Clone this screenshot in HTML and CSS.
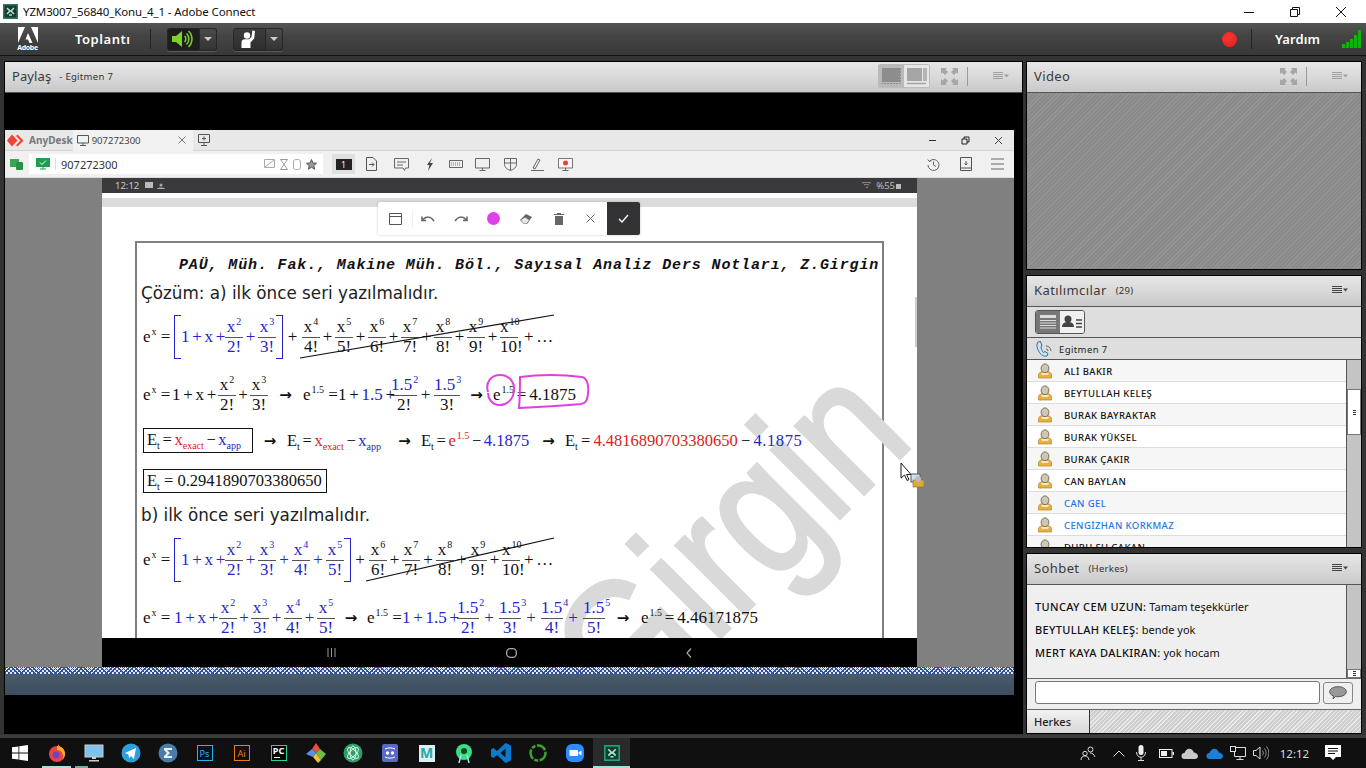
FILE: index.html
```html
<!DOCTYPE html>
<html lang="tr">
<head>
<meta charset="utf-8">
<title>YZM3007_56840_Konu_4_1 - Adobe Connect</title>
<link rel="stylesheet" href="styles.css">
</head>
<body>
<svg class="defs" width="0" height="0">
  <symbol id="user" viewBox="0 0 16 16">
    <path d="M1.5 15v-3.5c0-1.5 2-2.5 3.5-3h6c1.5.5 3.500 1.500 3.500 3V15z" fill="#e8b040" stroke="#b88420" stroke-width=".7"/>
    <ellipse cx="8" cy="5.300" rx="3.900" ry="4.400" fill="#cfc6b0" stroke="#6e665a" stroke-width=".9"/>
    <path d="M4 10h8l-1 2H5z" fill="#f4e8c8"/>
  </symbol>
  <symbol id="menu" viewBox="0 0 16 8">
    <path d="M0 .5h10M0 2.500h10M0 4.500h10M0 6.500h10" stroke="currentColor" stroke-width="1"/>
    <path d="M11 2.500h5l-2.500 3z" fill="currentColor"/>
  </symbol>
  <symbol id="expand" viewBox="0 0 17 17">
    <path d="M0 0h6L4.500 1.500 7 4 4 7 1.500 4.500 0 6zM17 0v6l-1.500-1.500L13 7l-3-3 2.500-2.500L11 0zM0 17v-6l1.500 1.500L4 10l3 3-2.500 2.500L6 17zM17 17h-6l1.500-1.500L10 13l3-3 2.500 2.500L17 11z" fill="#a6a6a6"/>
  </symbol>
</svg>

<header class="titlebar">
  <svg class="app-ico" width="15" height="15" viewBox="0 0 15 15"><rect width="15" height="15" fill="#2c7a5e"/><rect x="1.500" y="1.500" width="12" height="12" fill="#1d3a33"/><path d="M4 4l3 3-3 3M11 4L8 7l3 3M6 11h3" stroke="#9fe8c8" stroke-width="1.600" fill="none"/></svg>
  <span class="win-title">YZM3007_56840_Konu_4_1 - Adobe Connect</span>
  <div class="win-ctrls">
    <svg width="12" height="12" viewBox="0 0 12 12"><path d="M1 6.500h10" stroke="#111"/></svg>
    <svg width="12" height="12" viewBox="0 0 12 12"><path d="M1.500 3.500h7v7h-7zM3.500 3.500v-2h7v7h-2" stroke="#111" fill="none"/></svg>
    <svg width="12" height="12" viewBox="0 0 12 12"><path d="M1 1l10 10M11 1L1 11" stroke="#111"/></svg>
  </div>
</header>

<nav class="topbar">
  <div class="adobe">
    <svg width="20" height="16" viewBox="0 0 20 16"><path d="M0 0h7L0 16zM20 0h-7l7 16zM10 6l4.500 10h-3L10 12.500H7.500z" fill="#fff"/></svg>
    <span class="adobe-t">Adobe</span>
  </div>
  <span class="top-label">Toplantı</span>
  <span class="top-sep"></span>
  <div class="btn-group">
    <span class="tb-main on">
      <svg width="22" height="18" viewBox="0 0 22 18"><path d="M0 6h4l6-5v16l-6-5H0z" fill="#7fd02a"/><path d="M12.500 6a4 4 0 010 6M14.500 3.500a7.500 7.500 0 010 11M16.500 1a11 11 0 010 16" stroke="#7fd02a" stroke-width="1.500" fill="none"/></svg>
    </span>
    <span class="tb-drop"><i class="caret"></i></span>
  </div>
  <div class="btn-group second">
    <span class="tb-main">
      <svg width="18" height="20" viewBox="0 0 18 20"><circle cx="7" cy="6.500" r="3.200" fill="#fff"/><path d="M1.500 19v-5.500c0-2 1.500-3.200 3-3.200h4.500l2.500-2.300.8-6.500 2.700.5-.8 7.500-3.700 4V19z" fill="#fff"/></svg>
    </span>
    <span class="tb-drop"><i class="caret"></i></span>
  </div>
  <span class="top-spacer"></span>
  <span class="rec"></span>
  <span class="top-sep sep-b"></span>
  <span class="top-label help">Yardım</span>
  <div class="signal"><i class="b1"></i><i class="b2"></i><i class="b3"></i><i class="b4"></i><i class="b5"></i></div>
</nav>

<main class="room">
  <section class="panel share">
    <div class="pod-head">
      <span class="pod-title pay">Paylaş</span><span class="pod-sub">- Egitmen 7</span>
      <span class="grow"></span>
      <div class="view-toggle">
        <span class="vt on"><svg width="20" height="17" viewBox="0 0 20 17"><rect x="0" y="0" width="18" height="14" fill="#8d8d8d"/><path d="M18.500 0v15.500H0" stroke="#8d8d8d" stroke-dasharray="2 1" fill="none"/></svg></span>
        <span class="vt"><svg width="20" height="17" viewBox="0 0 20 17"><rect x="0" y="0" width="15" height="13" fill="#a5a5a5"/><path d="M17 0v13M19 0v13M0 15.500h19" stroke="#a5a5a5" stroke-width="1.500"/></svg></span>
      </div>
      <svg class="ico-exp" width="17" height="17"><use href="#expand"/></svg>
      <span class="head-sep"></span>
      <svg class="ico-menu dim" width="16" height="8"><use href="#menu"/></svg>
    </div>
    <div class="share-body">
      <div class="remote">
        <div class="ad-title">
          <svg class="ad-logo" width="17" height="13" viewBox="0 0 17 13"><path d="M5 .5L10.500 6.500 5 12.500 0 6.500z" fill="#ef443b"/><path d="M10.500.5L16.500 6.500l-6 6L9 11l4.500-4.500L9 2z" fill="#ef443b"/></svg>
          <span class="ad-name">AnyDesk</span>
          <div class="ad-tab">
            <svg width="12" height="11" viewBox="0 0 12 11"><path d="M.5.500h11v7.500H.5zM6 8v2.500M3 10.500h6" stroke="#555" fill="none"/></svg>
            <span>907272300</span>
            <span class="grow"></span>
            <svg width="8" height="8" viewBox="0 0 8 8"><path d="M.5.500l7 7M7.500.500l-7 7" stroke="#777"/></svg>
          </div>
          <svg class="ad-new" width="12" height="12" viewBox="0 0 12 12"><path d="M.5.500h11v8H.5zM6 9v2.500M3 11.500h6M6 2.500v4M4 4.500h4" stroke="#555" fill="none"/></svg>
          <span class="grow"></span>
          <svg class="ad-ctl" width="9" height="9" viewBox="0 0 9 9"><path d="M1 4.500h7" stroke="#333"/></svg>
          <svg class="ad-ctl" width="9" height="9" viewBox="0 0 9 9"><path d="M1 3h5v5H1zM3 3V1h5v5H6" stroke="#222" fill="none"/></svg>
          <svg class="ad-ctl" width="9" height="9" viewBox="0 0 9 9"><path d="M1 1l7 7M8 1L1 8" stroke="#444"/></svg>
        </div>
        <div class="ad-tool">
          <svg class="ad-ok" width="13" height="11" viewBox="0 0 13 11"><rect width="9" height="8" fill="#3aa552"/><rect x="6" y="3" width="7" height="8" rx="1" fill="#2b8f47"/></svg>
          <div class="ad-addr">
            <svg width="14" height="12" viewBox="0 0 14 12"><rect width="14" height="9" fill="#1f9e4d"/><path d="M4 4.500l2 2 4-4" stroke="#fff" fill="none"/><path d="M4 11h6M7 9v2" stroke="#1f9e4d"/></svg>
            <span class="addr-sep"></span>
            <span class="addr-t">907272300</span>
            <span class="grow"></span>
            <svg class="addr-i" width="11" height="10" viewBox="0 0 11 10"><path d="M.5.500h10v8H.5zM1 8l9-7" stroke="#aaa" fill="none"/></svg>
            <svg class="addr-i" width="8" height="11" viewBox="0 0 8 11"><path d="M.5.500h7L.5 10.500h7z" stroke="#999" fill="none"/></svg>
            <svg class="addr-i" width="8" height="11" viewBox="0 0 8 11"><path d="M.5 2v7c0 2 7 2 7 0V2c0-2-7-2-7 0z" stroke="#aaa" fill="none"/></svg>
            <svg class="addr-i" width="11" height="11" viewBox="0 0 11 11"><path d="M5.500.500l1.500 3.500 3.500.3-2.700 2.300.9 3.600-3.200-2-3.200 2 .9-3.600L.5 4.300 4 4z" stroke="#555" fill="#999"/></svg>
          </div>
          <span class="chip"><b>1</b></span>
          <svg class="t1" width="11" height="14" viewBox="0 0 11 14"><path d="M.5.500h6.500l3.500 3.500v9.500H.5zM3 7.500h5M6 5.500l2 2-2 2" stroke="#555" fill="none"/></svg>
          <svg class="t2" width="15" height="13" viewBox="0 0 15 13"><path d="M.5.500h14v9.500h-3l-1 2.500-1.500-2.500H.5zM3 4h9M3 7h6" stroke="#666" fill="none"/></svg>
          <svg class="t3" width="7" height="13" viewBox="0 0 7 13"><path d="M6 0L1 7h2.500L2 13l5-8H4z" fill="#444"/></svg>
          <svg class="t4" width="14" height="8" viewBox="0 0 14 8"><path d="M.5.500h13v7H.5z" stroke="#666" fill="none"/><path d="M2 3h10M2 5h10" stroke="#777" stroke-dasharray="1 1"/></svg>
          <svg class="t5" width="15" height="13" viewBox="0 0 15 13"><path d="M.5.500h14v9.500H.5zM7.500 10v2.500M4.500 12.500h6" stroke="#666" fill="none"/></svg>
          <svg class="t6" width="13" height="13" viewBox="0 0 13 13"><path d="M.5.500h12v6c0 3-3 5-6 6-3-1-6-3-6-6zM.5 5h12M6.500 .5v12" stroke="#666" fill="none"/></svg>
          <svg class="t7" width="13" height="13" viewBox="0 0 13 13"><path d="M2 10L7 1l2 1-5 9zM0 12.500h13" stroke="#666" fill="none"/></svg>
          <svg class="t8" width="15" height="13" viewBox="0 0 15 13"><path d="M.5.500h14v9.500H.5z" stroke="#777" fill="#f7f7f7"/><circle cx="7.500" cy="5" r="2.500" fill="#e8413a"/><path d="M7.500 10v2.500M4.500 12.500h6" stroke="#666"/></svg>
          <span class="grow"></span>
          <svg class="r1" width="13" height="13" viewBox="0 0 13 13"><path d="M2.500 3.200A5.500 5.500 0 111 7M.8 1.500l1.500 2 2-.8M6.500 3.500v3.500l2.500 1.500" stroke="#666" fill="none"/></svg>
          <svg class="r2" width="12" height="14" viewBox="0 0 12 14"><path d="M.5.500h11v13H.5zM.5 11h11M6 4v3.500M4.500 6.500L6 8l1.500-1.500" stroke="#555" fill="none"/></svg>
          <svg class="r3" width="13" height="12" viewBox="0 0 13 12"><path d="M0 1h13M0 6h13M0 11h13" stroke="#666"/></svg>
        </div>
        <div class="stage">
          <div class="phone">
            <div class="status">
              <span class="st-t">12:12</span>
              <svg width="8" height="7" viewBox="0 0 8 7"><rect width="8" height="6" fill="#bbb"/></svg>
              <svg width="8" height="6" viewBox="0 0 8 6"><circle cx="4" cy="2" r="1.500" fill="#aaa"/><path d="M0 6c0-2 8-2 8 0z" fill="#aaa"/></svg>
              <span class="grow"></span>
              <svg width="11" height="7" viewBox="0 0 11 7"><path d="M1 1c3-1 6-1 9 0M3 3c2-.8 3-.8 5 0M5 5l2 .5" stroke="#999" fill="none"/></svg>
              <span class="st-b">%55</span>
              <svg class="st-l" width="5" height="7" viewBox="0 0 5 7"><rect y="2" width="5" height="5" fill="#bbb"/></svg>
            </div>
            <div class="screen">
              <div class="strip"></div>
              <div class="doc">
                <div class="doc-head">PAÜ, Müh. Fak., Makine Müh. Böl., Sayısal Analiz Ders Notları, Z.Girgin</div>
                <div class="para p-a">Çözüm: a) ilk önce seri yazılmalıdır.</div>

                <div class="eq eq1">
                  <span class="lead">e<sup>x</sup> =</span>
                  <span class="brk l"></span>
                  <span class="pre blue w44">1 + x +</span>
                  <span class="fr blue"><span>x<sup>2</sup></span><span>2!</span></span><span class="op blue">+</span>
                  <span class="fr blue"><span>x<sup>3</sup></span><span>3!</span></span>
                  <span class="brk r"></span>
                  <span class="op o19">+</span>
                  <span class="fr"><span>x<sup>4</sup></span><span>4!</span></span><span class="op">+</span>
                  <span class="fr"><span>x<sup>5</sup></span><span>5!</span></span><span class="op">+</span>
                  <span class="fr"><span>x<sup>6</sup></span><span>6!</span></span><span class="op">+</span>
                  <span class="fr"><span>x<sup>7</sup></span><span>7!</span></span><span class="op">+</span>
                  <span class="fr"><span>x<sup>8</sup></span><span>8!</span></span><span class="op">+</span>
                  <span class="fr"><span>x<sup>9</sup></span><span>9!</span></span><span class="op">+</span>
                  <span class="fr"><span>x<sup>10</sup></span><span>10!</span></span>
                  <span class="pre tail">+ …</span>
                  <svg class="strike s1" width="256" height="45" viewBox="0 0 256 45"><path d="M1 44L255 1" stroke="#111" stroke-width="1.200"/></svg>
                </div>

                <div class="eq eq2">
                  <span class="lead l29">e<sup>x</sup> =</span>
                  <span class="pre w46">1 + x +</span>
                  <span class="fr"><span>x<sup>2</sup></span><span>2!</span></span><span class="op o14">+</span>
                  <span class="fr"><span>x<sup>3</sup></span><span>3!</span></span>
                  <span class="arr a35">→</span>
                  <span class="lead l35">e<sup>1.5</sup> =</span>
                  <span class="pre w53">1 + <span class="blue">1.5</span> +</span>
                  <span class="fr f26 blue"><span>1.5<sup>2</sup></span><span class="blk">2!</span></span><span class="op o17">+</span>
                  <span class="fr f26 blue"><span>1.5<sup>3</sup></span><span class="blk">3!</span></span>
                  <span class="arr a33">→</span>
                  <span class="pre">e<sup>1.5</sup> = 4.1875</span>
                  <svg class="ink" width="108" height="38" viewBox="0 0 108 38"><path d="M6 19C3 8 10 2 18 2c9 0 15 7 14 16-1 9-8 15-16 14-6-1-10-6-10-12" stroke="#e040e0" stroke-width="2" fill="none"/><path d="M38 4C60 1 85 2 100 4c5 1 7 8 6 17-1 7-2 9-7 10-20 2-40 3-62 4 1-10 1-20 1-31z" stroke="#e040e0" stroke-width="2" fill="none"/></svg>
                </div>

                <div class="eq eq3">
                  <span class="box b1-w">E<sub>t</sub> = <span class="red">x<sub>exact</sub></span> − <span class="blue">x<sub>app</sub></span></span>
                  <span class="arr a34">→</span>
                  <span class="pre w101">E<sub>t</sub> = <span class="red">x<sub>exact</sub></span> − <span class="blue">x<sub>app</sub></span></span>
                  <span class="arr a33">→</span>
                  <span class="pre w111">E<sub>t</sub> = <span class="red">e<sup>1.5</sup></span> − <span class="blue">4.1875</span></span>
                  <span class="arr a33">→</span>
                  <span class="pre last">E<sub>t</sub> = <span class="red">4.4816890703380650</span> − <span class="blue wide">4.1875</span></span>
                </div>

                <div class="eq eq4">
                  <span class="box">E<sub>t</sub> = 0.2941890703380650</span>
                </div>

                <div class="para p-b">b) ilk önce seri yazılmalıdır.</div>

                <div class="eq eq5">
                  <span class="lead">e<sup>x</sup> =</span>
                  <span class="brk l"></span>
                  <span class="pre blue w44">1 + x +</span>
                  <span class="fr blue"><span>x<sup>2</sup></span><span>2!</span></span><span class="op blue">+</span>
                  <span class="fr blue"><span>x<sup>3</sup></span><span>3!</span></span><span class="op blue o16">+</span>
                  <span class="fr blue"><span>x<sup>4</sup></span><span>4!</span></span><span class="op blue o16">+</span>
                  <span class="fr blue"><span>x<sup>5</sup></span><span>5!</span></span>
                  <span class="brk r"></span>
                  <span class="op o18">+</span>
                  <span class="fr"><span>x<sup>6</sup></span><span>6!</span></span><span class="op">+</span>
                  <span class="fr"><span>x<sup>7</sup></span><span>7!</span></span><span class="op o16">+</span>
                  <span class="fr"><span>x<sup>8</sup></span><span>8!</span></span><span class="op">+</span>
                  <span class="fr"><span>x<sup>9</sup></span><span>9!</span></span><span class="op">+</span>
                  <span class="fr"><span>x<sup>10</sup></span><span>10!</span></span>
                  <span class="pre tail">+ …</span>
                  <svg class="strike s5" width="190" height="45" viewBox="0 0 190 45"><path d="M1 44L189 1" stroke="#111" stroke-width="1.200"/></svg>
                </div>

                <div class="eq eq6">
                  <span class="lead l31">e<sup>x</sup> =</span>
                  <span class="pre blue w45">1 + x +</span>
                  <span class="fr blue"><span>x<sup>2</sup></span><span>2!</span></span><span class="op blue o14">+</span>
                  <span class="fr blue"><span>x<sup>3</sup></span><span>3!</span></span><span class="op blue o15">+</span>
                  <span class="fr blue"><span>x<sup>4</sup></span><span>4!</span></span><span class="op blue o15">+</span>
                  <span class="fr blue"><span>x<sup>5</sup></span><span>5!</span></span>
                  <span class="arr a32">→</span>
                  <span class="lead l35">e<sup>1.5</sup> =</span>
                  <span class="pre blue w55">1 + 1.5 +</span>
                  <span class="fr f22 blue"><span>1.5<sup>2</sup></span><span>2!</span></span><span class="op blue o20">+</span>
                  <span class="fr f22 blue"><span>1.5<sup>3</sup></span><span>3!</span></span><span class="op blue o20">+</span>
                  <span class="fr f22 blue"><span>1.5<sup>4</sup></span><span>4!</span></span><span class="op blue o20">+</span>
                  <span class="fr f22 blue"><span>1.5<sup>5</sup></span><span>5!</span></span>
                  <span class="arr a36">→</span>
                  <span class="pre">e<sup>1.5</sup> = 4.46171875</span>
                </div>
                <div class="watermark">Girgin</div>
              </div>
              <div class="float-tools">
                <svg class="ft" width="13" height="12" viewBox="0 0 13 12"><path d="M.5.500h12v11H.5zM.5 3.500h12M4 3.500" stroke="#555" fill="none"/></svg>
                <span class="ft-sep"></span>
                <svg class="ft" width="14" height="8" viewBox="0 0 14 8"><path d="M1 1.500v4h4M1.500 5C5 1 10 1 13 6" stroke="#666" stroke-width="1.500" fill="none"/></svg>
                <svg class="ft" width="14" height="8" viewBox="0 0 14 8"><path d="M13 1.500v4H9M12.500 5C9 1 4 1 1 6" stroke="#666" stroke-width="1.500" fill="none"/></svg>
                <span class="dot"></span>
                <svg class="ft ft-e" width="13" height="12" viewBox="0 0 13 12"><path d="M0 7l6-6 6 3-5 7H4z" fill="#666"/><path d="M1 7l3 3.500h2.500L9 7 5 4.500z" fill="#e8e8e8"/></svg>
                <svg class="ft ft-t" width="10" height="12" viewBox="0 0 10 12"><path d="M1 3h8v9H1zM3 0h4v1H3z" fill="#666"/><path d="M0 1.500h10" stroke="#666"/></svg>
                <svg class="ft ft-x" width="9" height="9" viewBox="0 0 9 9"><path d="M.5.500l8 8M8.500.500l-8 8" stroke="#666"/></svg>
                <span class="ft-ok"><svg width="11" height="9" viewBox="0 0 11 9"><path d="M1 5l3 3 6-7" stroke="#fff" stroke-width="1.300" fill="none"/></svg></span>
              </div>
              <span class="phone-scroll"></span>
            </div>
            <div class="navbar">
              <svg width="9" height="9" viewBox="0 0 9 9"><path d="M1 0v9M4.500 0v9M8 0v9" stroke="#9a9a9a"/></svg>
              <svg width="11" height="10" viewBox="0 0 11 10"><rect x=".7" y=".7" width="9.600" height="8.600" rx="3.500" stroke="#aaa" stroke-width="1.300" fill="none"/></svg>
              <svg width="6" height="10" viewBox="0 0 6 10"><path d="M5 .5L1 5l4 4.500" stroke="#aaa" stroke-width="1.200" fill="none"/></svg>
            </div>
          </div>
          <svg class="cursor" width="24" height="28" viewBox="0 0 24 28"><path d="M1 1v15l3.500-3 2.500 5.500 2-1-2.500-5H11z" fill="#fff" stroke="#000" stroke-width=".9"/><rect x="11" y="12" width="9" height="8" fill="#cfe0f0" stroke="#556"/><rect x="13" y="18" width="11" height="7" fill="#e0a838" stroke="#8a6a20" stroke-width=".6"/><circle cx="18" cy="17" r="3" fill="#bbb"/></svg>
        </div>
        <div class="stripe"></div>
        <div class="bluebar"></div>
      </div>
    </div>
  </section>

  <aside class="side">
    <section class="panel video">
      <div class="pod-head">
        <span class="pod-title">Video</span>
        <span class="grow"></span>
        <svg class="ico-exp" width="17" height="17"><use href="#expand"/></svg>
        <span class="head-sep"></span>
        <svg class="ico-menu dim" width="16" height="8"><use href="#menu"/></svg>
      </div>
      <div class="video-body"></div>
    </section>

    <section class="panel people">
      <div class="pod-head">
        <span class="pod-title">Katılımcılar</span><span class="pod-sub count">(29)</span>
        <span class="grow"></span>
        <svg class="ico-menu" width="16" height="8"><use href="#menu"/></svg>
      </div>
      <div class="people-tools">
        <div class="list-toggle">
          <span class="lt on"><svg width="16" height="16" viewBox="0 0 16 16"><path d="M0 1h16v3H0z" fill="#ddd"/><path d="M0 6.500h16M0 9h16M0 11.500h16M0 14h16" stroke="#ddd"/></svg></span>
          <span class="lt"><svg width="20" height="14" viewBox="0 0 20 14"><circle cx="6" cy="4" r="3.500" fill="#444"/><path d="M0 12c0-4 3-5 6-5s6 1 6 5z" fill="#444"/><path d="M14 5h6M14 8.500h6M14 12h6" stroke="#444" stroke-width="1.500"/></svg></span>
        </div>
      </div>
      <div class="presenter">
        <svg width="16" height="16" viewBox="0 0 16 16"><path d="M2 1c-2 2-1 7 1.500 10.500S9 15.500 11 15l1-2.500-3-2-1.500 1C6 10 5 7.500 5 5.500L6 5 4.500 .5z" fill="#cfe3f2" stroke="#2e6c9c"/><path d="M10 8a2 2 0 012 2M10 5a5 5 0 015 5" stroke="#666" fill="none"/></svg>
        <span>Egitmen 7</span>
      </div>
      <div class="people-list">
        <ul class="rows">
          <li><svg width="16" height="16"><use href="#user"/></svg><span>ALİ BAKIR</span></li>
          <li><svg width="16" height="16"><use href="#user"/></svg><span>BEYTULLAH KELEŞ</span></li>
          <li><svg width="16" height="16"><use href="#user"/></svg><span>BURAK BAYRAKTAR</span></li>
          <li><svg width="16" height="16"><use href="#user"/></svg><span>BURAK YÜKSEL</span></li>
          <li><svg width="16" height="16"><use href="#user"/></svg><span>BURAK ÇAKIR</span></li>
          <li><svg width="16" height="16"><use href="#user"/></svg><span>CAN BAYLAN</span></li>
          <li class="act"><svg width="16" height="16"><use href="#user"/></svg><span>CAN GEL</span></li>
          <li class="act"><svg width="16" height="16"><use href="#user"/></svg><span>CENGİZHAN KORKMAZ</span></li>
          <li><svg width="16" height="16"><use href="#user"/></svg><span>DURU SU ÇAKAN</span></li>
        </ul>
        <div class="vscroll big"><span class="thumb"><i></i></span></div>
      </div>
    </section>

    <section class="panel chat">
      <div class="pod-head">
        <span class="pod-title">Sohbet</span><span class="pod-sub count">(Herkes)</span>
        <span class="grow"></span>
        <svg class="ico-menu" width="16" height="8"><use href="#menu"/></svg>
      </div>
      <div class="chat-body">
        <div class="msgs">
          <p><b>TUNCAY CEM UZUN:</b> Tamam teşekkürler</p>
          <p><b>BEYTULLAH KELEŞ:</b> bende yok</p>
          <p><b>MERT KAYA DALKIRAN:</b> yok hocam</p>
        </div>
        <div class="vscroll small"><span class="thumb"><i></i></span></div>
      </div>
      <div class="chat-input">
        <span class="field"></span>
        <span class="send"><svg width="18" height="14" viewBox="0 0 18 14"><path d="M9 .7c4.500 0 8.300 2 8.300 5s-3.800 5-8.300 5c-1 0-1.500 0-2.500-.2L4 13l.5-3C2 9 .7 7.500.7 5.700c0-3 3.800-5 8.300-5z" fill="#999" stroke="#555"/></svg></span>
      </div>
      <div class="chat-tabs"><span class="tab">Herkes</span><span class="tab-rest"></span></div>
    </section>
  </aside>
</main>

<footer class="taskbar">
  <div class="tasks">
    <span class="task start"><svg width="16" height="16" viewBox="0 0 16 16"><path d="M0 2.300l6.500-.9v6.200H0zM7.300 1.300L16 0v7.600H7.300zM0 8.400h6.500v6.200L0 13.700zM7.300 8.400H16V16l-8.700-1.300z" fill="#fff"/></svg></span>
    <span class="task run"><svg width="20" height="20" viewBox="0 0 20 20"><circle cx="10" cy="11" r="8" fill="#e8463c"/><path d="M10 3c5 0 8 4 8 8 0 2-1 4-2 5 1-6-2-9-6-9z" fill="#ffb020"/><circle cx="9" cy="12" r="3.500" fill="#7a3fc0"/><path d="M11 1c1 2 2 3 3 4l-3 1z" fill="#ff9a20"/></svg></span>
    <span class="task run2"><svg width="20" height="20" viewBox="0 0 20 20"><rect x="1" y="2" width="18" height="12" fill="#7cc4ee" stroke="#ccc"/><path d="M8 14h4v2H8zM5 17h10v1.500H5z" fill="#ccc"/></svg></span>
    <span class="task"><svg width="20" height="20" viewBox="0 0 20 20"><circle cx="10" cy="10" r="9.500" fill="#2f9fdc"/><path d="M4 10l11-5-2 11-3-3-2 2-.5-3.500z" fill="#fff"/></svg></span>
    <span class="task"><svg width="20" height="20" viewBox="0 0 20 20"><circle cx="10" cy="10" r="9.500" fill="#4a7cab"/><path d="M6 5h8v2H9l3 3-3 3h5v2H6v-2l3-3-3-3z" fill="#e8eef4"/></svg></span>
    <span class="task"><span class="sq ps">Ps</span></span>
    <span class="task"><span class="sq ai">Ai</span></span>
    <span class="task"><span class="sq pc">PC<i></i></span></span>
    <span class="task"><svg width="20" height="20" viewBox="0 0 20 20"><path d="M10 0l4 6-4 4-4-4z" fill="#e8503c"/><path d="M14 6l6 5-5 6-5-7z" fill="#6abf4b"/><path d="M6 6l4 4-3 4-7-3z" fill="#5b8ee8"/><path d="M10 10l5 7-3 3-5-6z" fill="#f0c040"/></svg></span>
    <span class="task"><svg width="20" height="20" viewBox="0 0 20 20"><circle cx="10" cy="10" r="9.500" fill="#2e9e6c"/><g stroke="#d8f4e6" fill="none"><ellipse cx="10" cy="10" rx="3" ry="7"/><ellipse cx="10" cy="10" rx="7" ry="3" transform="rotate(45 10 10)"/><ellipse cx="10" cy="10" rx="7" ry="3" transform="rotate(-45 10 10)"/></g></svg></span>
    <span class="task"><svg width="20" height="20" viewBox="0 0 20 20"><rect x="2" y="1" width="16" height="18" rx="2" fill="#5a68c8"/><circle cx="7.500" cy="10" r="1.700" fill="#fff"/><circle cx="12.500" cy="10" r="1.700" fill="#fff"/><path d="M5 6c3-1.500 7-1.500 10 0M5 14c3 1.500 7 1.500 10 0" stroke="#fff" fill="none"/></svg></span>
    <span class="task"><span class="sq maya">M</span></span>
    <span class="task"><svg width="20" height="20" viewBox="0 0 20 20"><circle cx="10" cy="9" r="8" fill="#3ddc84"/><circle cx="10" cy="8" r="3" fill="#0e4a2a"/><path d="M7 12l-2 8M13 12l2 8" stroke="#9ee" stroke-width="1.500"/></svg></span>
    <span class="task"><svg width="20" height="20" viewBox="0 0 20 20"><path d="M14.500 0L20 2.500v15L14.500 20 6 12l-3.500 3L0 13.500V6.500L2.500 5 6 8zM14.500 5.500L9.500 10l5 4.500z" fill="#0a7acc"/></svg></span>
    <span class="task"><svg width="20" height="20" viewBox="0 0 20 20"><circle cx="10" cy="10" r="7.500" stroke="#3aa52e" stroke-width="2.500" stroke-dasharray="10 1.500 4 1.500" fill="none"/></svg></span>
    <span class="task"><svg width="20" height="20" viewBox="0 0 20 20"><rect x="1" y="1" width="18" height="18" rx="6" fill="#2d8cff"/><path d="M4.500 7h7.500a1 1 0 011 1v5H5.500a1 1 0 01-1-1zM13.500 9.500l3-2v5l-3-2z" fill="#fff"/></svg></span>
    <span class="task active"><svg width="16" height="16" viewBox="0 0 15 15"><rect width="15" height="15" fill="#1fa37c"/><rect x="1.500" y="1.500" width="12" height="12" fill="#173a33"/><path d="M4 4l3 3-3 3M11 4L8 7l3 3M6 11h3" stroke="#9fe8c8" stroke-width="1.600" fill="none"/></svg></span>
  </div>
  <span class="grow"></span>
  <div class="tray">
    <svg class="tr-people" width="16" height="15" viewBox="0 0 16 15"><circle cx="10.500" cy="3.500" r="2.500" stroke="#ddd" fill="none"/><circle cx="5" cy="7.500" r="2.200" stroke="#ddd" fill="none"/><path d="M1 14c0-3 2-4 4-4s3.500 1 4 4M10 7c2 0 4 1 5 4" stroke="#ddd" fill="none"/></svg>
    <svg class="tr-chev" width="12" height="7" viewBox="0 0 12 7"><path d="M.5 6.500L6 1l5.500 5.500" stroke="#ddd" fill="none"/></svg>
    <svg class="tr-mic" width="10" height="16" viewBox="0 0 10 16"><rect x="2.500" y="0" width="5" height="10" rx="2.500" fill="#eee"/><path d="M.5 7c0 7 9 7 9 0M5 12v3M2 15.500h6" stroke="#ddd" fill="none"/></svg>
    <svg class="tr-bat" width="15" height="9" viewBox="0 0 15 9"><rect x=".5" y=".5" width="12.500" height="8" stroke="#eee" fill="none"/><rect x="2" y="2" width="6" height="5" fill="#eee"/><rect x="13.500" y="3" width="1.500" height="3" fill="#eee"/></svg>
    <svg class="tr-cl" width="17" height="11" viewBox="0 0 17 11"><path d="M3.500 11a3 3 0 010-6C4.500 2 7 0 9.500 1c2 .5 3 2 3.200 3.500 2.300 0 4.300 2 4.300 3.500 0 2-1.500 3-3 3z" fill="#c9c9c9"/></svg>
    <svg class="tr-cl2" width="17" height="11" viewBox="0 0 17 11"><path d="M3.500 11a3 3 0 010-6C4.500 2 7 0 9.500 1c2 .5 3 2 3.200 3.500 2.300 0 4.300 2 4.300 3.500 0 2-1.500 3-3 3z" fill="#1a80d8"/></svg>
    <svg class="tr-net" width="16" height="14" viewBox="0 0 16 14"><path d="M4.500 1.500h11v9h-11zM10 10.500V13M6.500 13.500h7" stroke="#ddd" fill="none"/><rect x=".5" y=".5" width="5" height="5" fill="#111" stroke="#ddd"/></svg>
    <svg class="tr-vol" width="16" height="14" viewBox="0 0 16 14"><path d="M.5 4.500h2.500L7 1v12L3 9.500H.5z" stroke="#ddd" fill="none"/><path d="M9.500 4.500a4 4 0 010 5M11.500 2.500a7 7 0 010 9M13.500 .5a10 10 0 010 13" stroke="#888" fill="none"/></svg>
    <span class="clock">12:12</span>
    <svg class="tr-note" width="16" height="16" viewBox="0 0 16 16"><path d="M0 0h16v12h-5l-3 3-3-3H0z" fill="#fff"/><path d="M3 3.500h10M3 6h10M3 8.500h7" stroke="#111"/></svg>
  </div>
</footer>
</body>
</html>
```

FILE: styles.css
```css
* { box-sizing: border-box; }
html, body { margin: 0; height: 100%; }
body {
  width: 1366px; height: 768px; overflow: hidden;
  display: flex; flex-direction: column;
  font-family: "Noto Sans", "Open Sans", sans-serif;
  background: #2e2e2e;
}
.defs { position: absolute; }
.grow { flex: 1 1 auto; }
svg { display: block; flex: none; }

/* window title */
.titlebar { height: 23px; background: #fff; display: flex; align-items: center; padding-left: 3px; flex: none; }
.win-title { margin-left: 5px; font-size: 11.500px; letter-spacing: -.12px; color: #111; white-space: nowrap; }
.win-ctrls { margin-left: auto; display: flex; gap: 34px; padding-right: 19px; }

/* top bar */
.topbar { height: 33px; flex: none; display: flex; align-items: center;
  background: linear-gradient(#555 0, #444 40%, #383838 100%); border-bottom: 1px solid #111; color: #fff; padding-left: 18px; }
.adobe { width: 19px; display: flex; flex-direction: column; align-items: center; }
.adobe-t { font-size: 7px; font-weight: 700; line-height: 8px; letter-spacing: -.3px; margin-top: 1px; }
.top-label { font-size: 13px; font-weight: 600; letter-spacing: .55px; margin-left: 38px; white-space: nowrap; }
.top-sep { width: 1px; height: 20px; background: #232323; margin-left: 19px; }
.btn-group { display: flex; height: 23px; margin-left: 16px; border-radius: 3px; box-shadow: 0 1px 0 #5a5a5a; }
.btn-group.second { margin-left: 16px; }
.tb-main { width: 33px; display: flex; align-items: center; justify-content: center;
  background: linear-gradient(#3c3c3c, #2e2e2e); border: 1px solid #262626; border-radius: 3px 0 0 3px; }
.tb-main.on { background: #1e1e1e; }
.tb-drop { width: 17px; display: flex; align-items: center; justify-content: center;
  background: linear-gradient(#4a4a4a, #333); border: 1px solid #262626; border-left: 0; border-radius: 0 3px 3px 0; }
.caret { width: 0; height: 0; border: 4px solid transparent; border-top: 4px solid #ccc; border-bottom: 0; }
.top-spacer { flex: 1; }
.rec { width: 15px; height: 15px; border-radius: 50%; background: radial-gradient(circle at 40% 35%, #f33, #d81f1f); }
.sep-b { margin-left: 14px; }
.help { margin-left: 23px; letter-spacing: .1px; }
.signal { display: flex; align-items: flex-end; gap: 1px; height: 18px; margin-left: 22px; margin-right: 5px; }
.signal i { width: 3px; background: #0cb40c; display: block; }
.b1 { height: 4px; } .b2 { height: 6px; } .b3 { height: 9px; } .b4 { height: 13px; } .b5 { height: 18px; }

/* room */
.room { flex: 1 1 auto; display: flex; gap: 3px; padding: 5px 4px 4px 4px; min-height: 0; background: #333; }
.panel { border: 1px solid #000; display: flex; flex-direction: column; min-height: 0; }
.share { width: 1019px; }
.side { width: 336px; display: flex; flex-direction: column; gap: 5px; }
.pod-head { height: 31px; flex: none; display: flex; align-items: center; padding: 0 13px 2px 7px;
  background: linear-gradient(#e6e6e6, #d6d6d6 60%, #c8c8c8); border-bottom: 1px solid #555; }
.pod-title { font-size: 13px; letter-spacing: .4px; color: #3a3a3a; }
.pay { letter-spacing: .1px; }
.pod-sub { font-size: 9.500px; letter-spacing: .3px; color: #333; margin-left: 8px; }
.count { margin-left: 9px; }
.view-toggle { display: flex; height: 24px; border: 1px solid #bbb; border-radius: 2px; }
.vt { width: 25px; display: flex; align-items: center; justify-content: center; }
.vt.on { background: #b9b9b9; }
.vt:not(.on) { background: #e6e6e6; }
.ico-exp { margin-left: 11px; }
.head-sep { width: 1px; height: 19px; background: #999; margin-left: 9px; }
.ico-menu { color: #444; }
.head-sep + .ico-menu { margin-left: 25px; }
.ico-menu.dim { color: #a0a0a0; }

/* share body */
.share-body { flex: 1; background: #000; padding-top: 37px; min-height: 0; }
.remote { width: 1009px; display: flex; flex-direction: column; }
.ad-title { height: 21px; background: #e8e8e8; border-bottom: 1px solid #d4d4d4; display: flex; align-items: center; padding-left: 2px; padding-right: 11px; }
.ad-name { font-size: 10px; font-weight: 700; color: #777; margin-left: 5px; white-space: nowrap; }
.ad-tab { width: 120px; height: 21px; background: #f2f2f2; display: flex; align-items: center; gap: 3px; padding: 0 7px 0 4px; font-size: 9.500px; color: #444; }
.ad-new { margin-left: 5px; }
.ad-ctl { margin-left: 24px; }
.ad-tool { height: 27px; background: #f0f0f0; display: flex; align-items: center; padding-left: 5px; padding-right: 10px; border-bottom: 1px solid #ddd; }
.ad-addr { width: 294px; height: 20px; margin-left: 6px; background: #fff; display: flex; align-items: center; padding: 0 6px 0 7px; }
.addr-sep { width: 1px; height: 12px; background: #ddd; margin-left: 5px; }
.addr-t { font-size: 11px; color: #333; margin-left: 5px; }
.addr-i { margin-left: 5px; }
.chip { width: 23px; height: 20px; margin-left: 9px; background: #e0e0e0; display: flex; align-items: center; justify-content: center; }
.chip b { width: 16px; height: 11px; background: #222; color: #fff; font-size: 8px; line-height: 11px; text-align: center; font-weight: 400; }
.t1 { margin-left: 11px; } .t2 { margin-left: 17px; } .t3 { margin-left: 17px; } .t4 { margin-left: 16px; }
.t5 { margin-left: 12px; } .t6 { margin-left: 14px; } .t7 { margin-left: 14px; } .t8 { margin-left: 14px; }
.r1 { margin-right: 20px; } .r2 { margin-right: 19px; }

.stage { height: 489px; background: #808080; padding-left: 97px; position: relative; }
.phone { width: 815px; height: 489px; display: flex; flex-direction: column; }
.status { height: 15px; flex: none; background: #3a3a3c; display: flex; align-items: center; gap: 4px; padding: 0 16px 0 13px; color: #c8c8c8; font-size: 9.500px; }
.st-t { margin-right: 2px; }
.st-b { color: #bbb; }
.st-l { margin-left: -3px; }
.screen { flex: 1; min-height: 0; background: #fff; position: relative; overflow: hidden; padding-top: 5px; }
.strip { height: 9px; background: #dcdcde; }
.doc { width: 749px; margin: 34px 0 0 33px; height: 460px; border-style: solid; border-color: #808080; border-width: 2px 2px 0 2px; position: relative; padding-left: 6px; }
.doc-head { font: italic 700 15px/20px "Liberation Mono", monospace; letter-spacing: .86px; color: #111; margin: 13px 0 0 36px; white-space: nowrap; position: relative; z-index: 1; }
.para { font: 400 16.800px/24px "DejaVu Sans", sans-serif; color: #222; margin-left: -2px; position: relative; z-index: 1; white-space: nowrap; }
.p-a { margin-top: 5px; }
.p-b { margin-top: 10px; }

.eq { display: flex; align-items: center; position: relative; z-index: 1; font: 400 17px/18px "Liberation Serif", serif; color: #111; white-space: nowrap; }
.eq sup { font-size: 10px; line-height: 0; vertical-align: 7px; margin-left: 1px; }
.eq sub { font-size: 10px; line-height: 0; vertical-align: -4px; }
.eq1 { height: 46px; margin-top: 9px; }
.eq2 { height: 44px; margin-top: 13px; }
.eq3 { height: 25px; margin-top: 11px; font-size: 16.500px; }
.eq4 { height: 24px; margin-top: 16px; font-size: 16.500px; }
.eq5 { height: 46px; margin-top: 10px; }
.eq6 { height: 44px; margin-top: 13px; }
.blue { color: #2424c8; }
.red { color: #e02020; }
.blk { color: #111; }
.lead { width: 31px; flex: none; }
.l29 { width: 29px; } .l31 { width: 31px; } .l35 { width: 35px; }
.pre { flex: none; word-spacing: -1.500px; }
.last { word-spacing: -1px; }
.wide { letter-spacing: .6px; }
.w44 { width: 44px; } .w45 { width: 45px; } .w46 { width: 46px; } .w53 { width: 53px; } .w55 { width: 55px; } .w101 { width: 101px; } .w111 { width: 111px; }
.tail { margin-left: 6px; }
.eq5 .tail { margin-left: 4px; }
.fr { display: flex; flex-direction: column; align-items: center; width: 18px; flex: none; }
.fr > span { display: block; width: 100%; text-align: center; }
.fr > span:first-child { border-bottom: 1px solid #555; padding-bottom: 1px; }
.f26 { width: 26px; } .f22 { width: 22px; }
.op { width: 15px; flex: none; text-align: center; }
.o14 { width: 14px; } .o15 { width: 15px; } .o16 { width: 16px; } .o17 { width: 17px; } .o18 { width: 18px; } .o19 { width: 19px; } .o20 { width: 20px; }
.arr { flex: none; font: 700 15px/18px "DejaVu Sans", sans-serif; text-align: center; color: #111; }
.a32 { width: 32px; } .a33 { width: 33px; } .a34 { width: 34px; } .a35 { width: 35px; } .a36 { width: 36px; }
.brk { width: 7px; height: 44px; flex: none; border: 1.500px solid #2424c8; }
.brk.l { border-right: 0; }
.brk.r { border-left: 0; }
.box { flex: none; border: 1px solid #111; height: 100%; padding: 0 4px 0 3px; line-height: 22px; word-spacing: -1.500px; display: block; }
.eq4 .box { word-spacing: 0; }
.b1-w { width: 110px; }
.strike { position: absolute; }
.s1 { left: 156px; top: 0; }
.s5 { left: 222px; top: 0; }
.ink { position: absolute; left: 339px; top: 0; }
.watermark { position: absolute; left: 383px; top: 376px; font: 400 152px/152px "Liberation Sans", sans-serif; color: #d9d9d9; -webkit-text-stroke: 3px #d9d9d9; transform: rotate(-45deg) scale(1, 1.2); transform-origin: 0 0; white-space: nowrap; z-index: 0; }

.float-tools { position: absolute; left: 276px; top: 9px; width: 262px; height: 33px; background: #fff; box-shadow: 0 0 3px rgba(0,0,0,.2); display: flex; align-items: center; padding-left: 11px; border-radius: 2px; }
.ft { margin-right: 19px; }
.ft-e { margin-right: 21px; }
.ft-t { margin-right: 22px; }
.ft-x { margin-right: 0; }
.ft-sep { width: 1px; height: 16px; background: #eee; margin: 0 8px 0 -9px; }
.dot { width: 13px; height: 13px; flex: none; border-radius: 50%; background: #e040e8; margin-right: 20px; }
.ft-ok { width: 33px; height: 33px; flex: none; margin-left: auto; background: #333336; display: flex; align-items: center; justify-content: center; border-radius: 0 2px 2px 0; }
.phone-scroll { position: absolute; right: 0; top: 104px; width: 2px; height: 50px; background: #ccc; }
.navbar { height: 29px; flex: none; background: #000; display: flex; align-items: center; justify-content: space-between; padding: 0 225px; }
.cursor { position: absolute; left: 895px; top: 284px; }
.stripe { height: 7px; background-color: #dfe6f4; background-image: repeating-linear-gradient(45deg, #3050a0 0 1px, transparent 1px 3px), repeating-linear-gradient(-45deg, #3050a0 0 1px, transparent 1px 3px); }
.bluebar { height: 21px; background: linear-gradient(#4a5b6d, #3c4d5e); }

/* video */
.video { height: 209px; flex: none; }
.video-body { flex: 1; background: #8f8f8f; background-image: repeating-linear-gradient(135deg, #959595 0 1px, #8a8a8a 1px 3px); }

/* people */
.people { height: 273px; flex: none; background: #dedede; }
.people-tools { height: 31px; flex: none; background: #dedede; border-bottom: 1px solid #555; padding: 3px 8px; }
.list-toggle { display: flex; width: 50px; height: 24px; border: 1px solid #555; border-radius: 3px; overflow: hidden; }
.lt { width: 25px; display: flex; align-items: center; justify-content: center; background: #f0f0f0; }
.lt.on { background: #777; }
.presenter { height: 22px; flex: none; display: flex; align-items: center; gap: 7px; padding: 1px 0 0 9px; font-size: 9.500px; letter-spacing: .4px; color: #222; background: #dedede; border-bottom: 1px solid #555; }
.people-list { flex: 1; min-height: 0; display: flex; background: #fff; overflow: hidden; }
.rows { list-style: none; margin: 0; padding: 0; flex: 1; }
.rows li { height: 22px; display: flex; align-items: center; padding: 1px 0 0 10px; gap: 11px; font-size: 9.500px; font-weight: 500; letter-spacing: .4px; color: #111; border-bottom: 1px solid #ddd; background: #fff; white-space: nowrap; }
.rows li:nth-child(odd) { background: #f6f6f6; }
.rows li.act span { color: #1a78e8; }
.vscroll { width: 15px; flex: none; background: #c4c4c4; border-left: 1px solid #555; position: relative; }
.thumb { position: absolute; left: 0; right: 0; background: #fff; border: 1px solid #777; display: flex; align-items: center; justify-content: center; }
.thumb i { width: 3px; height: 5px; background: repeating-linear-gradient(#333 0 1px, transparent 1px 2px); display: block; }
.big .thumb { top: 29px; height: 46px; }
.small .thumb { bottom: 0; height: 9px; }

/* chat */
.chat { flex: 1; min-height: 0; background: #efefef; }
.chat-body { height: 94px; flex: none; display: flex; background: #efefef; border-bottom: 1px solid #666; }
.msgs { flex: 1; padding: 13px 0 0 8px; font-size: 11px; color: #111; }
.msgs p { margin: 0 0 6px; line-height: 17px; white-space: nowrap; }
.msgs b { font-weight: 500; letter-spacing: .35px; }
.chat-input { height: 31px; flex: none; display: flex; align-items: center; padding: 0 8px 3px; gap: 3px; background: #efefef; border-bottom: 1px solid #666; }
.field { width: 285px; height: 23px; background: #fff; border: 1px solid #777; border-radius: 3px; }
.send { width: 30px; height: 22px; border: 1px solid #888; border-radius: 3px; background: #f0f0f0; display: flex; align-items: center; justify-content: center; }
.chat-tabs { flex: 1; display: flex; min-height: 0; }
.tab { width: 63px; border-right: 1px solid #333; background: linear-gradient(#f2f2f2, #d8d8d8); font-size: 11px; font-weight: 500; color: #222; padding-left: 7px; display: flex; align-items: center; }
.tab-rest { flex: 1; background: #ddd; background-image: repeating-linear-gradient(135deg, #eaeaea 0 1px, #cfcfcf 1px 3px); }

/* taskbar */
.taskbar { height: 30px; flex: none; background: #101010; display: flex; align-items: center; box-shadow: 0 -3px 0 #3c3c3c; position: relative; }
.tasks { display: flex; height: 30px; padding-left: 1px; }
.task { width: 37px; height: 30px; display: flex; align-items: center; justify-content: center; position: relative; }
.task.run::after, .task.run2::after, .task.active::after { content: ""; position: absolute; left: 4px; right: 4px; bottom: 0; height: 2px; background: #9fe3dc; }
.task.run2::after { left: 0; right: 24px; background: #6fb0aa; }
.task.active { background: #2a2a2a; }
.task.active::after { left: 0; right: 0; }
.sq { width: 16px; height: 16px; display: flex; align-items: center; justify-content: center; font: 400 9px/1 "Noto Sans", sans-serif; }
.ps { border: 1px solid #27b4f0; color: #27b4f0; }
.ai { border: 1px solid #e87a10; color: #e87a10; }
.pc { border: 1px solid #21d789; color: #fff; background: #000; font-weight: 700; align-items: flex-start; position: relative; }
.pc i { position: absolute; left: 2px; bottom: 2px; width: 6px; height: 1px; background: #fff; }
.maya { background: #dfeeee; color: #2aa6ae; font-size: 14px; font-weight: 700; width: 16px; height: 17px; }
.tray { display: flex; align-items: center; padding-right: 25px; }
.tr-chev { margin-left: 17px; } .tr-mic { margin-left: 11px; } .tr-bat { margin-left: 13px; }
.tr-cl { margin-left: 7px; } .tr-cl2 { margin-left: 8px; } .tr-net { margin-left: 7px; } .tr-vol { margin-left: 7px; }
.clock { font-size: 11.500px; color: #ddd; margin-left: 10px; width: 31px; text-align: center; }
.tr-note { margin-left: 15px; }
```
